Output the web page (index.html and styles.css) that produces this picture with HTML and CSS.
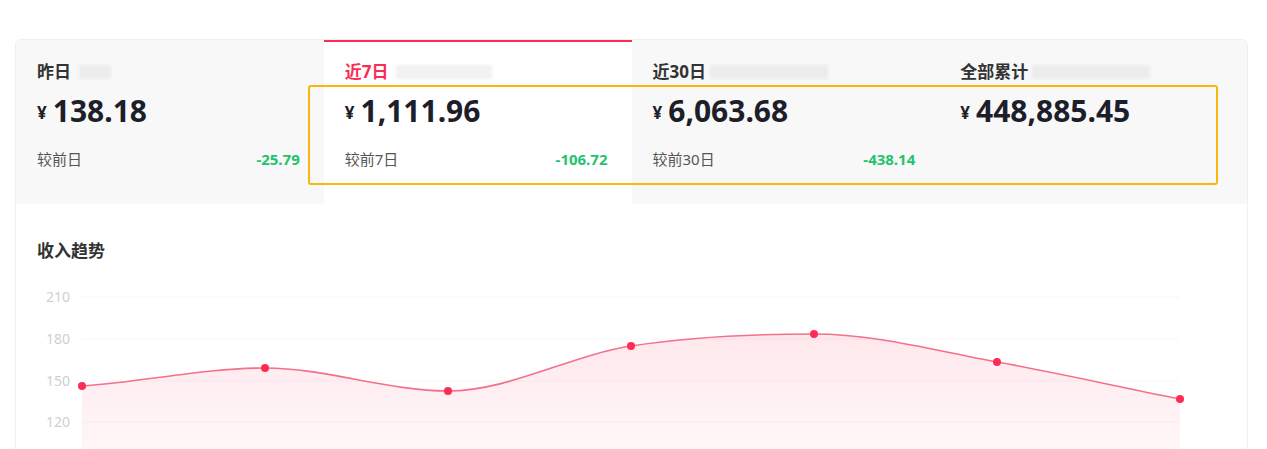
FILE: index.html
```html
<!DOCTYPE html>
<html lang="zh-CN">
<head>
    <meta charset="UTF-8">
    <title>收入概览</title>
    <link rel="stylesheet" href="styles.css">
</head>
<body>

    <div class="card">
        <div class="tabs">
            <div class="tab">
                <div class="tab-label">昨日<span class="mask mask-sm"></span></div>
                <div class="amount"><span class="yen">¥</span>138.18</div>
                <div class="compare"><span>较前日</span><span class="diff">-25.79</span></div>
            </div>
            <div class="tab active">
                <div class="tab-label">近7日<span class="mask mask-md"></span></div>
                <div class="amount"><span class="yen">¥</span>1,111.96</div>
                <div class="compare"><span>较前7日</span><span class="diff">-106.72</span></div>
            </div>
            <div class="tab">
                <div class="tab-label">近30日<span class="mask mask-lg"></span></div>
                <div class="amount"><span class="yen">¥</span>6,063.68</div>
                <div class="compare"><span>较前30日</span><span class="diff">-438.14</span></div>
            </div>
            <div class="tab">
                <div class="tab-label">全部累计<span class="mask mask-lg"></span></div>
                <div class="amount"><span class="yen">¥</span>448,885.45</div>
            </div>
        </div>

        <div class="highlight"></div>

        <div class="trend">
            <h3 class="trend-title">收入趋势</h3>
            <svg class="chart" width="1231" height="180" viewBox="0 0 1231 180">
                <defs>
                    <linearGradient id="area" x1="0" y1="0" x2="0" y2="1">
                        <stop offset="0" stop-color="#fe2c55" stop-opacity="0.11"/>
                        <stop offset="1" stop-color="#fe2c55" stop-opacity="0.04"/>
                    </linearGradient>
                </defs>
                <g class="grid">
                    <line x1="66" y1="26" x2="1164" y2="26"/>
                    <line x1="66" y1="68" x2="1164" y2="68"/>
                    <line x1="66" y1="110" x2="1164" y2="110"/>
                    <line x1="66" y1="151" x2="1164" y2="151"/>
                </g>
                <g class="axis">
                    <text x="54" y="31">210</text>
                    <text x="54" y="73">180</text>
                    <text x="54" y="115">150</text>
                    <text x="54" y="156">120</text>
                </g>
                <path class="area" d="M66 115 C127 111 188 97 249 97 C310 97 371 120 432 120 C493 120 554 84.5 615 75 C676 65.5 737 63 798 63 C859 63 920 80 981 91 C1042 102 1103 116 1164 128 L1164 180 L66 180 Z"/>
                <path class="line" d="M66 115 C127 111 188 97 249 97 C310 97 371 120 432 120 C493 120 554 84.5 615 75 C676 65.5 737 63 798 63 C859 63 920 80 981 91 C1042 102 1103 116 1164 128"/>
                <g class="dots">
                    <circle cx="66" cy="115" r="4"/>
                    <circle cx="249" cy="97" r="4"/>
                    <circle cx="432" cy="120" r="4"/>
                    <circle cx="615" cy="75" r="4"/>
                    <circle cx="798" cy="63" r="4"/>
                    <circle cx="981" cy="91" r="4"/>
                    <circle cx="1164" cy="128" r="4"/>
                </g>
            </svg>
        </div>
    </div>

</body>
</html>
```

FILE: styles.css
```css
body {
    margin: 0;
    padding: 39px 19px 0 15px;
    background: #fff;
    font-family: "Noto Sans", "Noto Sans CJK SC", sans-serif;
    color: #161823;
    overflow: hidden;
}
.card {
    position: relative;
    border: 1px solid #f0f0f0;
    border-bottom: none;
    border-radius: 6px 6px 0 0;
    height: 420px;
}
.tabs {
    display: grid;
    grid-template-columns: repeat(4, 1fr);
    height: 164px;
}
.tab {
    background: #f8f8f8;
    padding: 20px 24px 0 21px;
}
.tab:first-child {
    border-top-left-radius: 6px;
}
.tab:last-child {
    border-top-right-radius: 6px;
}
.tab.active {
    background: #fff;
    border-top: 2px solid #fe2c55;
    padding-top: 18px;
}
.tab.active .tab-label {
    color: #fe2c55;
}
.tab-label {
    display: flex;
    align-items: center;
    font-size: 17px;
    font-weight: 700;
    line-height: 24px;
    color: #333;
}
.mask {
    display: inline-block;
    height: 14px;
    margin-left: 8px;
    background: #ececec;
    filter: blur(1.5px);
}
.mask-sm {
    width: 32px;
}
.mask-md {
    width: 96px;
    background: #f1f1f1;
}
.mask-lg {
    width: 118px;
    margin-left: 4px;
}
.amount {
    margin-top: 9px;
    font-size: 30px;
    font-weight: 700;
    line-height: 36px;
    color: #1c1e2a;
}
.yen {
    font-size: 17px;
    margin-right: 6px;
    vertical-align: 3px;
}
.compare {
    display: flex;
    justify-content: space-between;
    margin-top: 17px;
    font-size: 15px;
    line-height: 22px;
    color: #555;
}
.diff {
    color: #25c26e;
    font-weight: 700;
}
.highlight {
    position: absolute;
    left: 292px;
    top: 45px;
    width: 906px;
    height: 96px;
    border: 2px solid #f6b80a;
    border-radius: 3px;
}
.trend {
    padding-top: 35px;
}
.trend-title {
    margin: 0 0 8px 21px;
    font-size: 17px;
    font-weight: 700;
    line-height: 24px;
    color: #333;
}
.chart {
    display: block;
}
.grid line {
    stroke: #f7f7f7;
    stroke-width: 1;
}
.axis text {
    font-family: "Noto Sans", sans-serif;
    font-size: 14px;
    fill: #cfcfcf;
    text-anchor: end;
}
.area {
    fill: url(#area);
}
.line {
    fill: none;
    stroke: #f2718b;
    stroke-width: 1.6;
}
.dots circle {
    fill: #fe2c55;
}
```
